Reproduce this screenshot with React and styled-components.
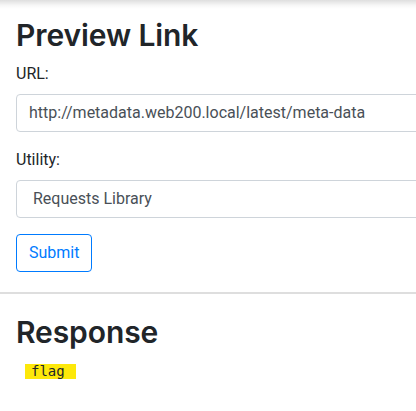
import React from "react";
import styled, { createGlobalStyle } from "styled-components";

const Global = createGlobalStyle`
  html, body {
    margin: 0;
    padding: 0;
    background: #fff;
    overflow: hidden;
  }
  body {
    font-family: Roboto, "Liberation Sans", sans-serif;
    font-size: 16px;
    line-height: 1.5;
    color: #212529;
  }
  * { box-sizing: border-box; }
`;

const TopShade = styled.div`
  height: 9px;
  background: linear-gradient(to bottom, rgba(0,0,0,0.13), rgba(0,0,0,0.03) 60%, rgba(0,0,0,0));
`;

const Section = styled.section`
  padding: ${(p) => p.$pad || "8px 0 0 16px"};
  width: 700px;
`;

const Heading = styled.h2`
  margin: 0 0 9px 0;
  font-family: Inter, Roboto, sans-serif;
  font-weight: 600;
  font-size: 30px;
  line-height: 36px;
  color: #212529;
  letter-spacing: -0.1px;
`;

const Group = styled.div`
  margin-bottom: 16px;
`;

const Label = styled.label`
  display: block;
  margin-bottom: 8px;
  font-size: 16px;
  line-height: 24px;
`;

const Field = styled.div`
  width: 600px;
  height: 38px;
  padding: 6px ${(p) => (p.$select ? "16px" : "12px")};
  border: 1px solid #ced4da;
  border-radius: 4px;
  font-size: 16px;
  line-height: 24px;
  color: #495057;
  background: #fff;
`;

const Button = styled.button`
  height: 38px;
  padding: 6px 12px;
  border: 1px solid #007bff;
  border-radius: 4px;
  background: #fff;
  color: #007bff;
  font-family: Roboto, sans-serif;
  font-size: 16px;
  line-height: 24px;
`;

const Rule = styled.hr`
  margin: 20px 0 0 0;
  border: 0;
  height: 2px;
  background: #dedede;
`;

const Output = styled.div`
  padding-left: 9px;
  margin-top: 4px;
`;

const Mark = styled.span`
  display: inline-block;
  width: 51px;
  height: 15px;
  padding-left: 6px;
  background: #fde80a;
  font-family: "DejaVu Sans Mono", "Liberation Mono", monospace;
  font-size: 14px;
  line-height: 15px;
  color: #212529;
`;

export default function App() {
  return (
    <>
      <Global />
      <TopShade />
      <Section>
        <Heading>Preview Link</Heading>
        <Group>
          <Label>URL:</Label>
          <Field>http://metadata.web200.local/latest/meta-data</Field>
        </Group>
        <Group>
          <Label>Utility:</Label>
          <Field $select>Requests Library</Field>
        </Group>
        <Button>Submit</Button>
      </Section>
      <Rule />
      <Section $pad="20px 0 0 16px">
        <Heading>Response</Heading>
        <Output>
          <Mark>flag</Mark>
        </Output>
      </Section>
    </>
  );
}
